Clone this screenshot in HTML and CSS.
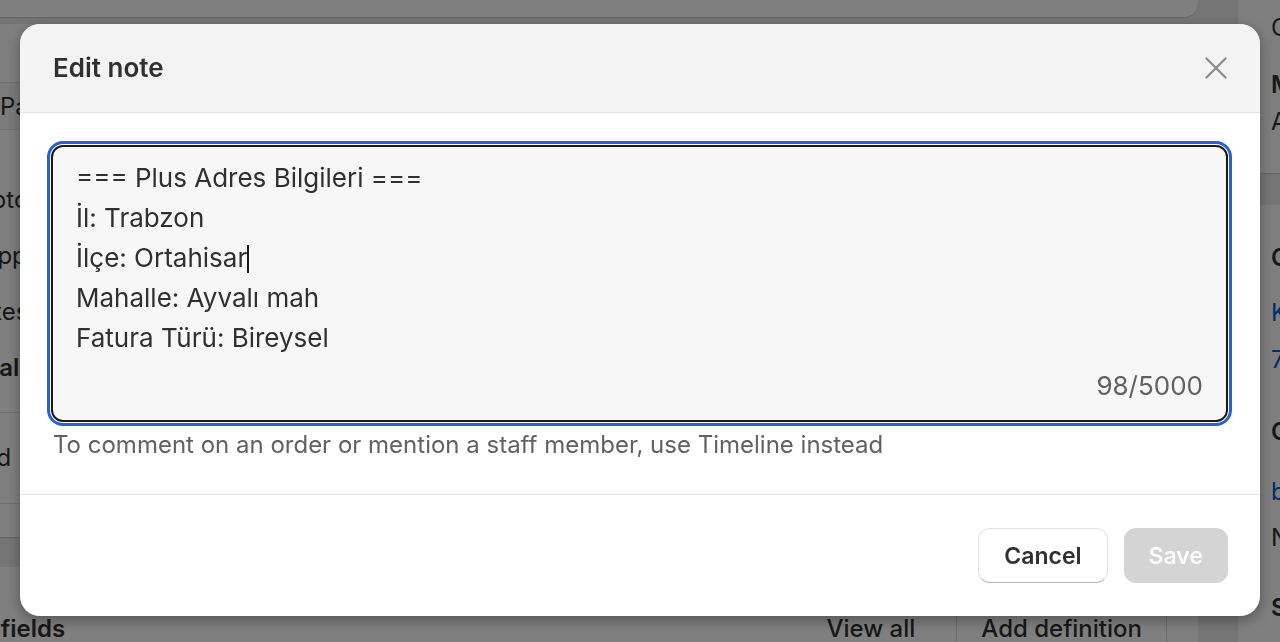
FILE: index.html
```html
<!DOCTYPE html>
<html lang="tr">
<head>
<meta charset="utf-8">
<title>Edit note</title>
<link rel="stylesheet" href="styles.css">
</head>
<body>
<div class="page">
  <main class="main">
    <section class="card card-top"></section>
    <section class="card card-payment">
      <div class="pay-head"></div>
      <div class="pay-band"><span>Payment pending</span></div>
      <div class="pay-rows">
        <div class="pay-row">Subtotal</div>
        <div class="pay-row">Shipping</div>
        <div class="pay-row">Taxes</div>
        <div class="pay-row pay-total">Total</div>
      </div>
      <div class="pay-divider"></div>
      <div class="pay-paid">Paid</div>
      <div class="pay-divider"></div>
      <div class="pay-foot"></div>
    </section>
    <section class="card card-meta">
      <div class="meta-head">
        <span class="meta-title">Metafields</span>
        <span class="meta-actions">
          <span class="meta-link">View all</span>
          <span class="meta-btn">Add definition</span>
        </span>
      </div>
    </section>
  </main>
  <aside class="side">
    <section class="card side-card side-a">
      <div class="side-row r1">Online Store</div>
      <div class="side-row r2 strong">Mağaza notu</div>
      <div class="side-row r3">Açıklama yok</div>
    </section>
    <section class="card side-card side-b">
      <div class="side-row b1 strong">Customer</div>
      <div class="side-row b2 link">Kemal Yılmaz</div>
      <div class="side-row b3 link">7 orders</div>
      <div class="side-row b4 strong">Contact information</div>
      <div class="side-row b5 link">bilgi@example.com</div>
      <div class="side-row b6">No phone number</div>
      <div class="side-row b7 strong">Shipping address</div>
    </section>
  </aside>
</div>

<div class="backdrop">
  <div class="modal" role="dialog" aria-labelledby="modal-title">
    <header class="modal-head">
      <h2 class="modal-title" id="modal-title">Edit note</h2>
      <button class="close" type="button" aria-label="Close">
        <svg width="22" height="22" viewBox="0 0 22 22" aria-hidden="true">
          <path d="M1.5 1.5 L20.5 20.5 M20.5 1.5 L1.5 20.5" stroke="#8a8a8a" stroke-width="2.2" stroke-linecap="round" fill="none"/>
        </svg>
      </button>
    </header>
    <div class="modal-body">
      <div class="field">
        <div class="lines">
          <div class="line">=== Plus Adres Bilgileri ===</div>
          <div class="line">İl: Trabzon</div>
          <div class="line">İlçe: Ortahisar<span class="caret"></span></div>
          <div class="line">Mahalle: Ayvalı mah</div>
          <div class="line">Fatura Türü: Bireysel</div>
        </div>
        <div class="counter">98/5000</div>
      </div>
      <p class="help">To comment on an order or mention a staff member, use Timeline instead</p>
    </div>
    <footer class="modal-foot">
      <button class="btn btn-secondary" type="button">Cancel</button>
      <button class="btn btn-primary" type="button" disabled>Save</button>
    </footer>
  </div>
</div>
</body>
</html>
```

FILE: styles.css
```css
* { box-sizing: border-box; }

html, body {
  margin: 0;
  height: 642px;
  overflow: hidden;
}

body {
  background: #ebebeb;
  font-family: Inter, "Noto Sans", "Liberation Sans", sans-serif;
  font-size: 24px;
  color: #303030;
}

/* ---------- background page ---------- */
.page {
  display: flex;
  gap: 40px;
  margin-left: -200px;
}

.main {
  width: 1398px;
  flex: none;
}

.card {
  background: #fff;
  border-radius: 14px;
  box-shadow: 0 1px 0 rgba(0,0,0,0.12);
}

.card-top {
  height: 60px;
  margin-top: -43px;
}

.card-payment {
  margin-top: 7px;
  height: 513px;
  display: flex;
  flex-direction: column;
}

.pay-head { height: 58px; }

.pay-band {
  height: 48px;
  background: #f7f7f7;
  border-top: 1px solid #e3e3e3;
  border-bottom: 1px solid #e3e3e3;
  display: flex;
  align-items: center;
  padding-left: 200px;
  white-space: nowrap;
}

.pay-rows { margin-top: 42px; padding-left: 162px; }

.pay-row {
  height: 56px;
  line-height: 56px;
}

.pay-total { font-weight: 600; }

.pay-divider {
  height: 1px;
  background: #e3e3e3;
  margin-top: 16px;
}

.pay-paid {
  height: 90px;
  line-height: 90px;
  padding-left: 162px;
}

.pay-paid + .pay-divider { margin-top: 0; }

.card-meta {
  margin-top: 30px;
  height: 120px;
  padding: 41px 31px 0 142px;
}

.meta-head {
  display: flex;
  justify-content: space-between;
  align-items: center;
  height: 40px;
}

.meta-title { font-weight: 600; }

.meta-actions {
  display: flex;
  align-items: center;
  gap: 41px;
}

.meta-link { font-weight: 500; }

.meta-btn {
  font-weight: 500;
  padding: 0 24px;
  height: 55px;
  display: flex;
  align-items: center;
  border-left: 1px solid #d4d4d4;
  border-right: 1px solid #d4d4d4;
}

.side {
  width: 320px;
  flex: none;
}

.side-card { padding-left: 33px; }

.side-row {
  line-height: 28px;
  white-space: nowrap;
}

.strong { font-weight: 600; }
.link { color: #005bd3; }

.side-a { padding-top: 14px; padding-bottom: 37px; border-radius: 0 0 14px 14px; }
.side-a .r2 { margin-top: 29px; }
.side-a .r3 { margin-top: 9px; }

.side-b { margin-top: 32px; padding-top: 39px; height: 460px; }
.side-b .b2 { margin-top: 27px; }
.side-b .b3 { margin-top: 19px; }
.side-b .b4 { margin-top: 44px; }
.side-b .b5 { margin-top: 32px; }
.side-b .b6 { margin-top: 18px; }
.side-b .b7 { margin-top: 42px; }

/* ---------- modal ---------- */
.backdrop {
  position: fixed;
  inset: 0;
  background: rgba(0, 0, 0, 0.5);
  display: flex;
  justify-content: center;
  align-items: flex-start;
  padding-top: 24px;
}

.modal {
  width: 1240px;
  background: #fff;
  border-radius: 20px;
  overflow: hidden;
  box-shadow: 0 4px 14px rgba(0, 0, 0, 0.35);
  color: #303030;
}

.modal-head {
  height: 89px;
  background: #f3f3f3;
  border-bottom: 1px solid #e3e3e3;
  display: flex;
  align-items: center;
  justify-content: space-between;
  padding: 0 33px 0 33px;
}

.modal-title {
  margin: 0;
  font-size: 26px;
  font-weight: 600;
  line-height: 32px;
}

.close {
  width: 22px;
  height: 22px;
  padding: 0;
  border: 0;
  background: none;
  display: flex;
}

.modal-body {
  padding: 32px 32px 35px 31px;
}

.field {
  height: 277px;
  border: 2px solid #1a1a1a;
  border-radius: 12px;
  background: #f7f7f7;
  outline: 3px solid #2a5fd6;
  outline-offset: 1px;
  padding: 11px 23px 14px;
  font-size: 26px;
}

.line {
  line-height: 40px;
  white-space: nowrap;
}

.caret {
  display: inline-block;
  width: 1.5px;
  height: 28px;
  background: #1a1a1a;
  vertical-align: -6px;
}

.counter {
  margin-top: 8px;
  line-height: 40px;
  text-align: right;
  color: #616161;
}

.help {
  margin: 9px 0 0 2px;
  line-height: 28px;
  font-size: 24px;
  color: #616161;
}

.modal-foot {
  border-top: 1px solid #e3e3e3;
  padding: 33px 32px;
  display: flex;
  justify-content: flex-end;
  gap: 16px;
}

.btn {
  height: 55px;
  border-radius: 12px;
  font-family: inherit;
  font-size: 23px;
  font-weight: 600;
  padding: 0 24px;
  cursor: pointer;
}

.btn-secondary {
  background: #fff;
  color: #303030;
  border: 1px solid #e0e0e0;
  border-bottom-color: #b5b5b5;
  padding: 0 25px;
}

.btn-primary {
  background: #d4d4d4;
  color: #fafafa;
  border: 0;
  padding: 0 25px;
}
```
